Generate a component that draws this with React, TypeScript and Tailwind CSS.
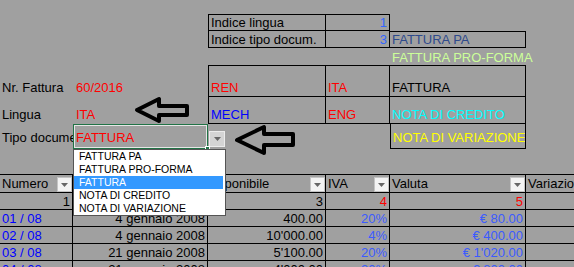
import clsx from "clsx";
import type { ReactNode } from "react";

const DROPDOWN_ITEMS = [
  "FATTURA PA",
  "FATTURA PRO-FORMA",
  "FATTURA",
  "NOTA DI CREDITO",
  "NOTA DI VARIAZIONE",
];

const ROWS = [
  { num: "01 / 08", date: "4 gennaio 2008", imp: "400.00", iva: "20%", val: "€ 80.00" },
  { num: "02 / 08", date: "4 gennaio 2008", imp: "10'000.00", iva: "4%", val: "€ 400.00" },
  { num: "03 / 08", date: "21 gennaio 2008", imp: "5'100.00", iva: "20%", val: "€ 1'020.00" },
  { num: "04 / 08", date: "21 gennaio 2008", imp: "4'000.00", iva: "20%", val: "€ 800.00" },
];

function Tri() {
  return (
    <svg width="7" height="4" viewBox="0 0 7 4">
      <polygon points="0,0 7,0 3.5,4" fill="#666" />
    </svg>
  );
}

function FilterBtn() {
  return (
    <span className="flex h-[15px] w-[15px] shrink-0 items-center justify-center border border-[#c4c4c4] bg-[#f3f3f3]">
      <Tri />
    </span>
  );
}

interface CellProps {
  pos: string;
  right?: boolean;
  className?: string;
  children?: ReactNode;
}

function Cell({ pos, right, className, children }: CellProps) {
  return (
    <div
      className={clsx(
        "flex items-end overflow-hidden whitespace-nowrap px-[2px] leading-[15px]",
        right && "justify-end",
        pos,
        className,
      )}
    >
      {children}
    </div>
  );
}

function Header({ pos, label }: { pos: string; label: string }) {
  return (
    <div
      className={clsx(
        "flex items-end justify-between overflow-hidden whitespace-nowrap border-t border-r border-b border-black pl-[2px] leading-[17px]",
        pos,
      )}
    >
      <span>{label}</span>
      <FilterBtn />
    </div>
  );
}

export default function App() {
  const grid = "border-r border-b border-black";

  return (
    <div className="relative h-[267px] w-[574px] overflow-hidden bg-[#a0a0a0] font-['Liberation_Sans',Arial,sans-serif] text-[13px] text-black">
      <div className="grid grid-cols-[73px_135px_118px_64px_136px_48px] grid-rows-[14px_17px_17px_17px_32px_27px_25px_25px_19px_17px_17px_17px_17px_17px]">
        {/* Indici */}
        <Cell pos="col-start-3 row-start-2" className="border border-black">
          Indice lingua
        </Cell>
        <Cell pos="col-start-4 row-start-2" right className="border-t border-r border-b border-black text-[#3366ff]">
          1
        </Cell>
        <Cell pos="col-start-3 row-start-3" className="border-r border-b border-l border-black">
          Indice tipo docum.
        </Cell>
        <Cell pos="col-start-4 row-start-3" right className="border-r border-b border-black text-[#3366ff]">
          3
        </Cell>
        <Cell pos="col-start-5 row-start-3" className="border-t border-r border-b border-black text-[#2e4a8c]">
          FATTURA PA
        </Cell>
        <Cell pos="col-start-5 row-start-4" className="overflow-visible text-[#ccff99]">
          FATTURA PRO-FORMA
        </Cell>

        {/* Dati fattura */}
        <Cell pos="col-start-1 row-start-5" className="pb-[2px]">
          Nr. Fattura
        </Cell>
        <Cell pos="col-start-2 row-start-5" className="pb-[2px] pl-[3px] text-[#ff0000]">
          60/2016
        </Cell>
        <Cell pos="col-start-3 row-start-5" className="border border-black pb-[1px] text-[#ff0000]">
          REN
        </Cell>
        <Cell pos="col-start-4 row-start-5" className="border-t border-r border-b border-black pb-[1px] text-[#ff0000]">
          ITA
        </Cell>
        <Cell pos="col-start-5 row-start-5" className="border-t border-r border-b border-black pb-[1px]">
          FATTURA
        </Cell>

        <Cell pos="col-start-1 row-start-6" className="pb-[2px]">
          Lingua
        </Cell>
        <Cell pos="col-start-2 row-start-6" className="pb-[2px] pl-[3px] text-[#ff0000]">
          ITA
        </Cell>
        <Cell pos="col-start-3 row-start-6" className="border-r border-b border-l border-black pb-[1px] text-[#0000ff]">
          MECH
        </Cell>
        <Cell pos="col-start-4 row-start-6" className={clsx(grid, "pb-[1px] text-[#ff0000]")}>
          ENG
        </Cell>
        <Cell pos="col-start-5 row-start-6" className={clsx(grid, "pb-[1px] text-[#00ffff]")}>
          NOTA DI CREDITO
        </Cell>

        <Cell pos="col-start-1 row-start-7" className="pb-[4px]">
          Tipo documento
        </Cell>
        {/* cella in modifica */}
        <div className="relative col-start-2 row-start-7 flex items-end border border-[#217346] pb-[3px] pl-[2px] leading-[15px] text-[#ff0000] shadow-[inset_0_0_0_1px_#e6e6e6]">
          FATTURA
          <span className="absolute -right-[3px] -bottom-[3px] h-[5px] w-[5px] border border-white bg-[#217346]" />
        </div>
        <div className="col-start-3 row-start-7 flex items-end pb-[2px] pl-[1px]">
          <span className="flex h-[16px] w-[16px] items-center justify-center border border-[#ececec] bg-[#d4d4d4]">
            <Tri />
          </span>
        </div>
        <Cell pos="col-start-5 row-start-7" className="border-r border-b border-l border-black pb-[3px] text-[#ffff00]">
          NOTA DI VARIAZIONE
        </Cell>

        {/* Intestazioni tabella */}
        <Header pos="col-start-1 row-start-9" label="Numero" />
        <Header pos="col-start-2 row-start-9" label="Data" />
        <Header pos="col-start-3 row-start-9" label="Imponibile" />
        <Header pos="col-start-4 row-start-9" label="IVA" />
        <Header pos="col-start-5 row-start-9" label="Valuta" />
        <Cell pos="col-start-6 row-start-9" className="border-t border-b border-black leading-[17px]">
          Variazione
        </Cell>

        {/* Indici colonne */}
        <Cell pos="col-start-1 row-start-10" right className={grid}>
          1
        </Cell>
        <Cell pos="col-start-2 row-start-10" right className={grid}>
          2
        </Cell>
        <Cell pos="col-start-3 row-start-10" right className={grid}>
          3
        </Cell>
        <Cell pos="col-start-4 row-start-10" right className={clsx(grid, "text-[#ff0000]")}>
          4
        </Cell>
        <Cell pos="col-start-5 row-start-10" right className={clsx(grid, "text-[#ff0000]")}>
          5
        </Cell>
        <Cell pos="col-start-6 row-start-10" className="border-b border-black" />

        {ROWS.map((r, i) => (
          <div key={r.num} className="col-span-6 grid grid-cols-subgrid" style={{ gridRowStart: 11 + i }}>
            <Cell pos="col-start-1" className={clsx(grid, "text-[#0000ff]")}>
              {r.num}
            </Cell>
            <Cell pos="col-start-2" right className={grid}>
              {r.date}
            </Cell>
            <Cell pos="col-start-3" right className={grid}>
              {r.imp}
            </Cell>
            <Cell pos="col-start-4" right className={clsx(grid, "text-[#3b5bff]")}>
              {r.iva}
            </Cell>
            <Cell pos="col-start-5" right className={clsx(grid, "text-[#3b5bff]")}>
              {r.val}
            </Cell>
            <Cell pos="col-start-6" className="border-b border-black" />
          </div>
        ))}
      </div>

      {/* Elenco a discesa della convalida */}
      <ul className="absolute top-[149px] left-[73px] z-10 w-[153px] border border-[#555] bg-white font-['Liberation_Sans',Arial,sans-serif] text-[10.5px] leading-[13px]">
        {DROPDOWN_ITEMS.map((item) => (
          <li
            key={item}
            className={clsx(
              "h-[13px] pl-[5px] whitespace-nowrap",
              item === "FATTURA" ? "mr-[2px] bg-[#3399ff] text-white" : "text-black",
            )}
          >
            {item}
          </li>
        ))}
      </ul>

      {/* Frecce disegnate */}
      <svg className="pointer-events-none absolute inset-0" width="574" height="267" viewBox="0 0 574 267">
        <polygon
          points="137,110 159,99 159,106 187,106 187,115 159,115 159,121"
          fill="none"
          stroke="#000"
          strokeWidth="4"
          strokeLinejoin="round"
        />
        <polygon
          points="237,140 264,127 264,134 293,134 293,145 264,145 264,153"
          fill="none"
          stroke="#000"
          strokeWidth="4"
          strokeLinejoin="round"
        />
      </svg>
    </div>
  );
}
